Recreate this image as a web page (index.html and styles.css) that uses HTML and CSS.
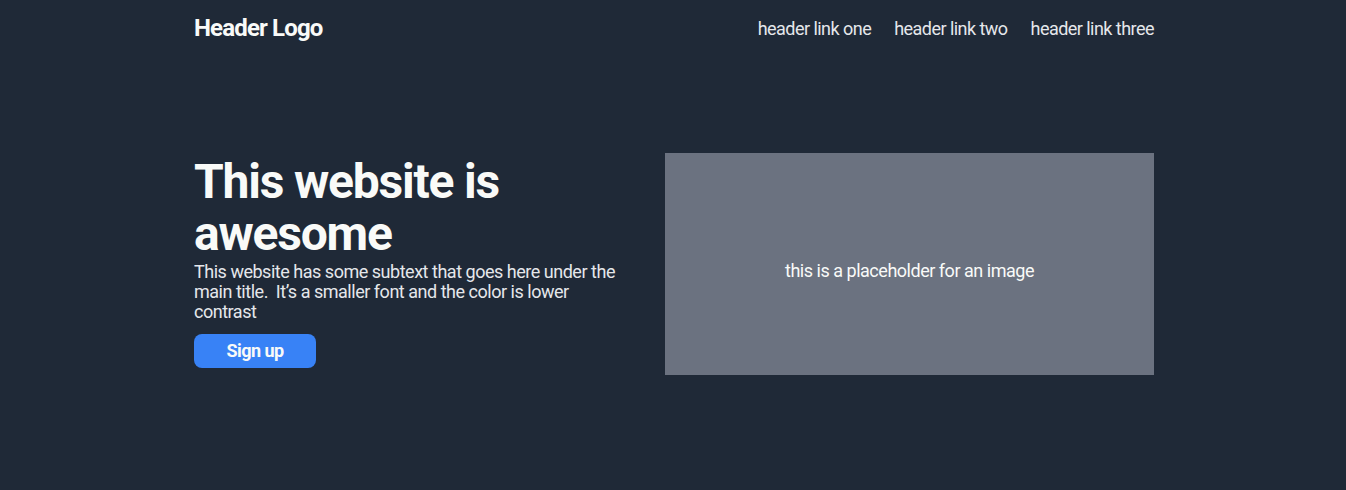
FILE: index.html
```html
<!DOCTYPE html>
<html lang="en">
<head>
<meta charset="utf-8">
<title>Header Logo</title>
<link rel="stylesheet" href="styles.css">
</head>
<body>
  <div class="page">
    <header class="header">
      <div class="logo">Header Logo</div>
      <nav class="nav">
        <a href="#" class="nav-link">header link one</a>
        <a href="#" class="nav-link">header link two</a>
        <a href="#" class="nav-link">header link three</a>
      </nav>
    </header>
    <section class="hero">
      <div class="hero-text">
        <h1 class="hero-title">This website is awesome</h1>
        <p class="hero-sub">This website has some subtext that goes here under the main title.&nbsp; It’s a smaller font and the color is lower contrast</p>
        <button class="btn">Sign up</button>
      </div>
      <div class="hero-image">this is a placeholder for an image</div>
    </section>
  </div>
</body>
</html>
```

FILE: styles.css
```css
* { box-sizing: border-box; }

html, body {
  margin: 0;
  padding: 0;
  background: #1f2937;
  font-family: Roboto, "Liberation Sans", sans-serif;
  letter-spacing: -0.03em;
}

body {
  min-height: 490px;
  padding-left: 2px;
}

.page {
  width: 960px;
  margin: 0 auto;
}

.header {
  display: flex;
  justify-content: space-between;
  align-items: center;
  padding: 14px 0;
}

.logo {
  font-size: 24px;
  font-weight: 700;
  letter-spacing: -0.035em;
  color: #f9faf8;
}

.nav {
  display: flex;
  gap: 23px;
}

.nav-link {
  font-size: 18px;
  letter-spacing: -0.03em;
  color: #e5e7eb;
  text-decoration: none;
}

.hero {
  display: flex;
  align-items: center;
  gap: 31px;
  padding-top: 97px;
}

.hero-text {
  width: 440px;
  display: flex;
  flex-direction: column;
  align-items: flex-start;
  padding-bottom: 4px;
}

.hero-title {
  margin: 0;
  font-size: 48px;
  line-height: 52px;
  font-weight: 700;
  letter-spacing: -0.025em;
  color: #f9faf8;
}

.hero-sub {
  margin: 2px 0 0;
  font-size: 18px;
  line-height: 20px;
  color: #e5e7eb;
}

.btn {
  margin-top: 12px;
  width: 122px;
  height: 34px;
  padding: 0;
  border: none;
  border-radius: 8px;
  background: #3882f6;
  color: #f9faf8;
  font-family: Roboto, "Liberation Sans", sans-serif;
  font-size: 18px;
  font-weight: 700;
  line-height: 34px;
  letter-spacing: -0.03em;
}

.hero-image {
  width: 489px;
  height: 222px;
  background: #6b7280;
  color: #f9faf8;
  font-size: 18px;
  display: flex;
  align-items: center;
  justify-content: center;
  padding-top: 12px;
}
```
